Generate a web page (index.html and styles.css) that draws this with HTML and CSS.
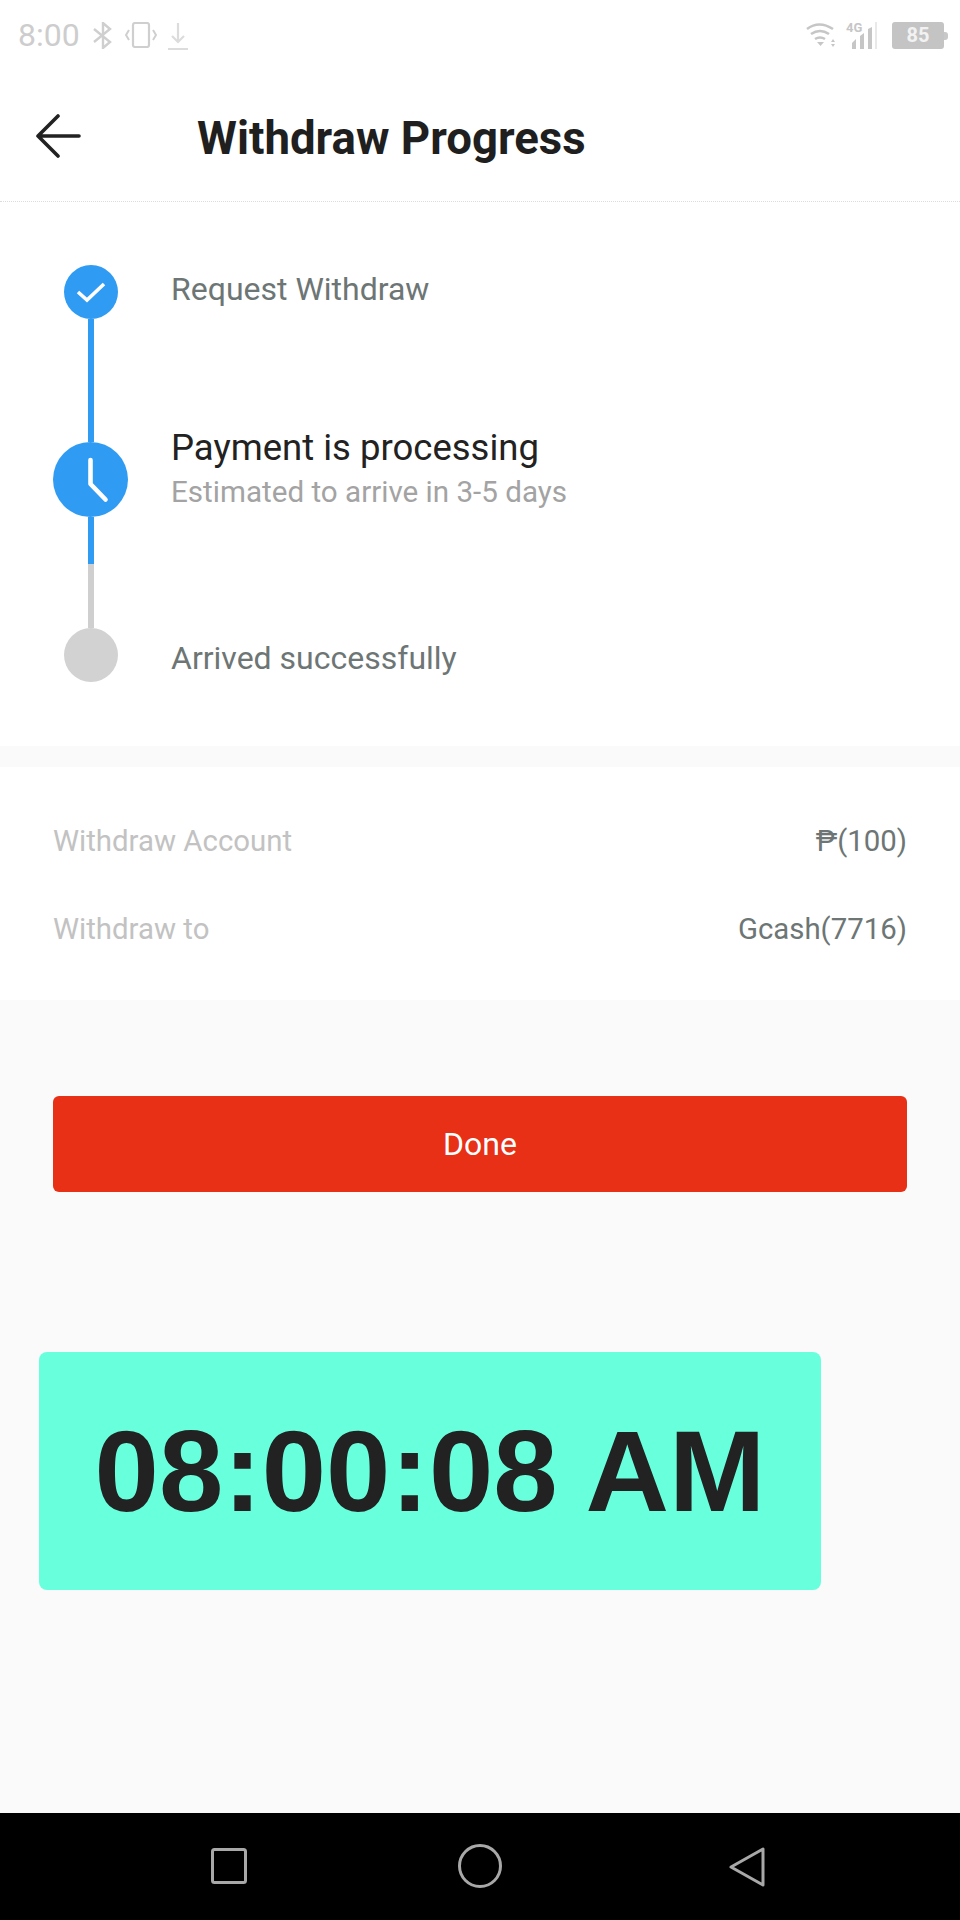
FILE: index.html
```html
<!DOCTYPE html>
<html lang="en">
<head>
<meta charset="utf-8">
<title>Withdraw Progress</title>
<link rel="stylesheet" href="styles.css">
</head>
<body>
<div class="page">
  <div class="top">
    <div class="status">
      <div class="status-left">
        <span class="clock">8:00</span>
        <svg class="ic-bt" viewBox="0 0 21 27"><path d="M1 7l16 13-7 6V1l7 6L1 20" fill="none" stroke="#cfcfcf" stroke-width="2.4"/></svg>
        <svg class="ic-vib" viewBox="0 0 32 26"><rect x="8" y="1" width="16" height="24" rx="2" fill="none" stroke="#cfcfcf" stroke-width="2.2"/><path d="M4 8l-3 5 3 5M28 8l3 5-3 5" fill="none" stroke="#cfcfcf" stroke-width="2"/></svg>
        <svg class="ic-dl" viewBox="0 0 20 28"><path d="M10 1v19M4 14l6 6 6-6M0 27h20" fill="none" stroke="#dcdcdc" stroke-width="2.2"/></svg>
      </div>
      <div class="status-right">
        <svg class="ic-wifi" viewBox="0 0 31 25"><path d="M1 7q12-9 26 0M5 12q9-6 18 0M9 17q5-3 10 0" fill="none" stroke="#c6c6c6" stroke-width="2.6"/><path d="M11 20h7l-3.500 4zM27 17l2 3h-4zM27 25l2-3h-4z" fill="#c6c6c6"/></svg>
        <div class="cell">
          <span class="cell-4g">4G</span>
          <svg class="ic-bars" viewBox="0 0 26 27"><path d="M1 27v-6l4-4v10zM9 27V14l4-3v16zM17 27V7l4-2v22z" fill="#c6c6c6"/><path d="M25 27V0" stroke="#e2e2e2" stroke-width="1.500"/></svg>
        </div>
        <div class="battery"><span class="battery-level">85</span></div>
        <span class="battery-tip"></span>
      </div>
    </div>
    <header class="bar">
      <svg class="ic-back" viewBox="0 0 46 44"><path d="M44 22H3M23 2L3 22l20 20" fill="none" stroke="#222" stroke-width="3.600" stroke-linecap="round" stroke-linejoin="round"/></svg>
      <h1 class="title">Withdraw Progress</h1>
    </header>
  </div>

  <section class="progress">
    <div class="track">
      <svg class="dot-small" viewBox="0 0 54 54"><circle cx="27" cy="27" r="27" fill="#2f9bf3"/><path d="M14 27l9 8 17-16" fill="none" stroke="#fff" stroke-width="3.600"/></svg>
      <span class="line line-a"></span>
      <svg class="dot-large" viewBox="0 0 75 75"><circle cx="37.500" cy="37.500" r="37.500" fill="#2f9bf3"/><path d="M37.500 18v24l15 15.500" fill="none" stroke="#fff" stroke-width="4.600" stroke-linecap="round" stroke-linejoin="round"/></svg>
      <span class="line line-b"></span>
      <span class="line line-c"></span>
      <span class="dot-grey"></span>
    </div>
    <div class="steps">
      <p class="step">Request Withdraw</p>
      <div class="current">
        <p class="current-title">Payment is processing</p>
        <p class="current-note">Estimated to arrive in 3-5 days</p>
      </div>
      <p class="step">Arrived successfully</p>
    </div>
  </section>

  <section class="details">
    <div class="row"><span class="key">Withdraw Account</span><span class="val">₱(100)</span></div>
    <div class="row"><span class="key">Withdraw to</span><span class="val">Gcash(7716)</span></div>
  </section>

  <main class="rest">
    <button class="done" type="button">Done</button>
    <div class="stamp">08:00:08 AM</div>
  </main>

  <nav class="nav">
    <svg class="nav-square" viewBox="0 0 36 36"><rect x="1.500" y="1.500" width="33" height="33" rx="2" fill="none" stroke="#a8a8a8" stroke-width="3"/></svg>
    <svg class="nav-circle" viewBox="0 0 44 44"><circle cx="22" cy="22" r="20.500" fill="none" stroke="#a8a8a8" stroke-width="3"/></svg>
    <svg class="nav-tri" viewBox="0 0 36 40"><path d="M34 2v36L2 20z" fill="none" stroke="#a8a8a8" stroke-width="3" stroke-linejoin="round"/></svg>
  </nav>
</div>
</body>
</html>
```
FILE: styles.css
```css
* { box-sizing: border-box; }
html, body { margin: 0; padding: 0; }
body { font-family: Roboto, "Liberation Sans", sans-serif; background: #fafafa; }
p, h1 { margin: 0; }

.page { width: 960px; height: 1920px; display: flex; flex-direction: column; background: #fafafa; overflow: hidden; }

.top { background: #fff; border-bottom: 1px dotted #dcdcdc; height: 202px; }

.status { height: 70px; display: flex; justify-content: space-between; align-items: flex-start; padding: 22px 12px 0 18px; }
.status-left { display: flex; align-items: flex-start; }
.clock { font-size: 32px; line-height: 27px; color: #cdcdcd; width: 75px; }
.ic-bt { width: 21px; height: 27px; margin-right: 11px; }
.ic-vib { width: 32px; height: 26px; margin-right: 11px; }
.ic-dl { width: 20px; height: 28px; }
.status-right { display: flex; align-items: flex-start; }
.ic-wifi { width: 31px; height: 25px; margin-right: 9px; }
.cell { position: relative; width: 31px; height: 27px; margin-right: 15px; }
.ic-bars { position: absolute; left: 5px; top: 0; width: 26px; height: 27px; }
.cell-4g { position: absolute; left: 0; top: 0; font-size: 13px; line-height: 12px; font-weight: 700; color: #c6c6c6; }
.battery { width: 52px; height: 27px; border-radius: 3px; background: #c4c4c4; display: flex; align-items: center; justify-content: center; }
.battery-level { font-size: 20px; line-height: 27px; font-weight: 700; color: #f2f2f2; }
.battery-tip { width: 4px; height: 8px; margin-top: 10px; border-radius: 0 3px 3px 0; background: #c8c8c8; }

.bar { height: 131px; display: flex; align-items: flex-start; padding: 44px 0 0 35px; }
.ic-back { width: 46px; height: 44px; flex: none; }
.title { margin: 0 0 0 116px; font-size: 45.6px; line-height: 50px; font-weight: 700; color: #1f1f1f; white-space: nowrap; }

.progress { height: 544px; background: #fff; display: flex; padding: 63px 0 0 53px; }
.track { width: 75px; display: flex; flex-direction: column; align-items: center; }
.dot-small { width: 54px; height: 54px; flex: none; }
.dot-large { width: 75px; height: 75px; flex: none; }
.dot-grey { width: 54px; height: 54px; flex: none; border-radius: 50%; background: #d2d2d2; }
.line { width: 6px; flex: none; margin-left: 1px; }
.line-a { height: 123px; background: #2f9bf3; }
.line-b { height: 47px; background: #2f9bf3; }
.line-c { height: 64px; background: #cfcfcf; }

.steps { margin-left: 43px; display: flex; flex-direction: column; align-items: flex-start; padding-top: 6px; }
.step { font-size: 32px; line-height: 36px; color: #6d7675; }
.current { margin-top: 119px; margin-bottom: 126px; }
.current-title { font-size: 36.5px; line-height: 44px; color: #222; }
.current-note { font-size: 29.6px; line-height: 44px; color: #a3a3a3; }

.details { margin-top: 21px; height: 233px; background: #fff; padding: 52px 53px 0; display: flex; flex-direction: column; gap: 44px; }
.row { display: flex; justify-content: space-between; font-size: 29.4px; line-height: 44px; }
.key { color: #c2c2c2; }
.val { color: #6d7675; }

.rest { flex: 1; padding: 96px 53px 0 39px; }
.done { display: block; width: 854px; height: 96px; margin-left: 14px; border: 0; border-radius: 6px; background: #e73016; color: #fff; font-family: inherit; font-size: 32px; }
.stamp { width: 782px; height: 238px; margin-top: 160px; border-radius: 8px; background: #68ffdc; color: #222; display: flex; align-items: center; justify-content: center; font-family: "Liberation Sans", Arial, sans-serif; font-size: 115.7px; font-weight: 700; }

.nav { height: 107px; background: #000; display: flex; align-items: flex-start; padding-top: 31px; }
.nav-square { width: 36px; height: 36px; margin: 4px 0 0 211px; }
.nav-circle { width: 44px; height: 44px; margin: 0 0 0 211px; }
.nav-tri { width: 36px; height: 40px; margin: 3px 0 0 227px; }
```
